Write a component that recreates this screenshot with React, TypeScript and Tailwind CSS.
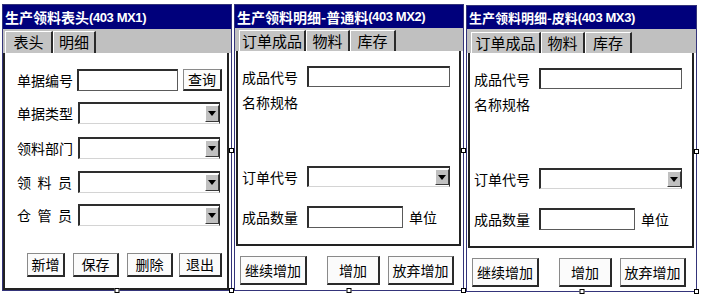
import type { ReactNode } from "react"

type BoxProps = { w: string }

const TextBox = ({ w }: BoxProps) => (
    <div className={`${w} h-full bg-white border-t-2 border-l-2 border-r border-b border-t-[#2e2e2e] border-l-[#2e2e2e] border-r-[#5a5a5a] border-b-[#5a5a5a]`} />
)

const Combo = ({ w }: BoxProps) => (
    <div className={`${w} h-full flex bg-white border-t-2 border-l-2 border-r border-b border-t-[#2e2e2e] border-l-[#2e2e2e] border-r-[#2e2e2e] border-b-[#d4d4d4]`}>
        <div className="flex-1" />
        <div className="w-[14px] my-[1px] flex items-center justify-center bg-[#c0c0c0] border-t border-l border-r border-b border-t-white border-l-white border-r-[#3a3a3a] border-b-[#3a3a3a]">
            <svg width="8" height="5" viewBox="0 0 8 5">
                <path d="M0 0h8L4 5z" fill="#000" />
            </svg>
        </div>
    </div>
)

const Btn = ({ className, children }: { className: string, children: ReactNode }) => (
    <div className={`${className} flex items-center justify-center bg-[#fbfbfb] text-[14px] text-black border-t border-l border-r-2 border-b-2 border-t-[#8a8a8a] border-l-[#8a8a8a] border-r-[#2a2a2a] border-b-[#2a2a2a]`}>
        {children}
    </div>
)

const Tab = ({ w, children }: { w: string, children: ReactNode }) => (
    <div className={`${w} h-full flex items-center justify-center bg-[#c4c4c4] text-[15px] text-black border-t border-l border-r-2 border-t-white border-l-white border-r-[#2a2a2a]`}>
        {children}
    </div>
)

const Handles = () => (
    <>
        <div className="absolute -bottom-[3px] left-1/2 -translate-x-1/2 w-[5px] h-[5px] bg-white border border-black" />
        <div className="absolute top-1/2 -right-[3px] w-[5px] h-[5px] bg-white border border-black" />
        <div className="absolute -bottom-[3px] -right-[3px] w-[5px] h-[5px] bg-white border border-black" />
    </>
)

const Title = ({ cn, code, size }: { cn: string, code: string, size: string }) => (
    <div className="h-full flex items-center pl-[2px] bg-[#00007b] text-white whitespace-nowrap">
        <span className={`${size} font-bold leading-none`}>{cn}</span>
        <span className="font-['Liberation_Sans',sans-serif] text-[13px] font-bold tracking-[-0.4px] leading-none">{code}</span>
    </div>
)

const Label = ({ w, children }: { w: string, children: ReactNode }) => (
    <span className={`${w} text-[14px] leading-none text-black`}>{children}</span>
)

const Spaced = ({ chars }: { chars: string[] }) => (
    <div className="w-[61px] pr-[6px] flex justify-between text-[14px] leading-none text-black">
        {chars.map((c) => <span key={c}>{c}</span>)}
    </div>
)

const HeaderPanel = () => (
    <div className="relative w-[230px] h-[287px] flex flex-col border border-[#34347a] bg-white">
        <div className="h-[24px]">
            <Title cn="生产领料表头" code="(403 MX1)" size="text-[14px]" />
        </div>
        <div className="h-[24px] flex items-end pl-[2px] bg-[#c0c0c0]">
            <div className="h-[22px] flex">
                <Tab w="w-[48px]">表头</Tab>
                <Tab w="w-[43px]">明细</Tab>
            </div>
        </div>
        <div className="flex-1 mr-[2px] flex flex-col pl-[12px] pt-[16px] bg-white border-l-2 border-r-2 border-b-2 border-[#222]">
            <div className="h-[22px] flex items-center">
                <Label w="w-[60px]">单据编号</Label>
                <TextBox w="w-[101px]" />
                <Btn className="ml-[5px] w-[39px] h-[22px]">查询</Btn>
            </div>
            <div className="h-[22px] mt-[11px] flex items-center">
                <Label w="w-[61px]">单据类型</Label>
                <Combo w="w-[142px]" />
            </div>
            <div className="h-[22px] mt-[13px] flex items-center">
                <Label w="w-[61px]">领料部门</Label>
                <Combo w="w-[142px]" />
            </div>
            <div className="h-[22px] mt-[12px] flex items-center">
                <Spaced chars={["领", "料", "员"]} />
                <Combo w="w-[142px]" />
            </div>
            <div className="h-[22px] mt-[11px] flex items-center">
                <Spaced chars={["仓", "管", "员"]} />
                <Combo w="w-[142px]" />
            </div>
            <div className="h-[24px] mt-[27px] ml-[10px] flex">
                <Btn className="w-[38px] h-full">新增</Btn>
                <Btn className="ml-[8px] w-[46px] h-full">保存</Btn>
                <Btn className="ml-[8px] w-[46px] h-full">删除</Btn>
                <Btn className="ml-[6px] w-[43px] h-full">退出</Btn>
            </div>
        </div>
        <Handles />
    </div>
)

type DetailProps = {
    title: string,
    code: string,
    tabs: [string, string][],
    titleSize: string,
    shift?: string,
    wide?: boolean
}

const DetailPanel = ({ title, code, tabs, titleSize, shift = "", wide = false }: DetailProps) => (
    <div className={`${shift} relative ${wide ? "w-[231px]" : "w-[230px]"} h-[287px] flex flex-col border border-[#34347a] bg-white`}>
        <div className="h-[23px]">
            <Title cn={title} code={code} size={titleSize} />
        </div>
        <div className={`${wide ? "h-[24px]" : "h-[23px]"} flex items-end pl-[4px] bg-[#c0c0c0]`}>
            <div className="h-[21px] flex">
                {tabs.map(([t, w]) => <Tab key={t} w={w}>{t}</Tab>)}
            </div>
        </div>
        <div className="h-[195px] ml-[1px] mr-[2px] flex flex-col pl-[4px] pt-[15px] bg-white border-l-2 border-r-2 border-b-2 border-[#222]">
            <div className="h-[21px] flex items-center">
                <Label w="w-[65px]">成品代号</Label>
                <TextBox w="w-[143px]" />
            </div>
            <div className="h-[21px] mt-[4px] flex items-center">
                <Label w="w-[65px]">名称规格</Label>
            </div>
            <div className="h-[21px] mt-[54px] flex items-center">
                <Label w="w-[65px]">订单代号</Label>
                <Combo w="w-[143px]" />
            </div>
            <div className="h-[22px] mt-[19px] flex items-center">
                <Label w="w-[65px]">成品数量</Label>
                <TextBox w="w-[96px]" />
                <Label w="ml-[6px] w-[40px]">单位</Label>
            </div>
        </div>
        <div className="flex-1 flex pl-[5px] pt-[10px] bg-white">
            <div className="h-[29px] flex">
                <Btn className="w-[67px] h-full">继续增加</Btn>
                <Btn className="ml-[20px] w-[53px] h-full">增加</Btn>
                <Btn className="ml-[8px] w-[66px] h-full">放弃增加</Btn>
            </div>
        </div>
        <Handles />
    </div>
)

const App = () => {
    return (
        <div className="w-[701px] h-[300px] bg-white flex items-start gap-[2px] pl-[2px] pt-[4px] font-['Noto_Sans_CJK_SC',sans-serif]">
            <HeaderPanel />
            <DetailPanel
                title="生产领料明细-普通料"
                code="(403 MX2)"
                titleSize="text-[14px]"
                tabs={[["订单成品", "w-[67px]"], ["物料", "w-[44px]"], ["库存", "w-[46px]"]]}
            />
            <DetailPanel
                title="生产领料明细-皮料"
                code="(403 MX3)"
                titleSize="text-[13px]"
                shift="mt-[1px]"
                wide
                tabs={[["订单成品", "w-[70px]"], ["物料", "w-[44px]"], ["库存", "w-[47px]"]]}
            />
        </div>
    )
}

export default App
